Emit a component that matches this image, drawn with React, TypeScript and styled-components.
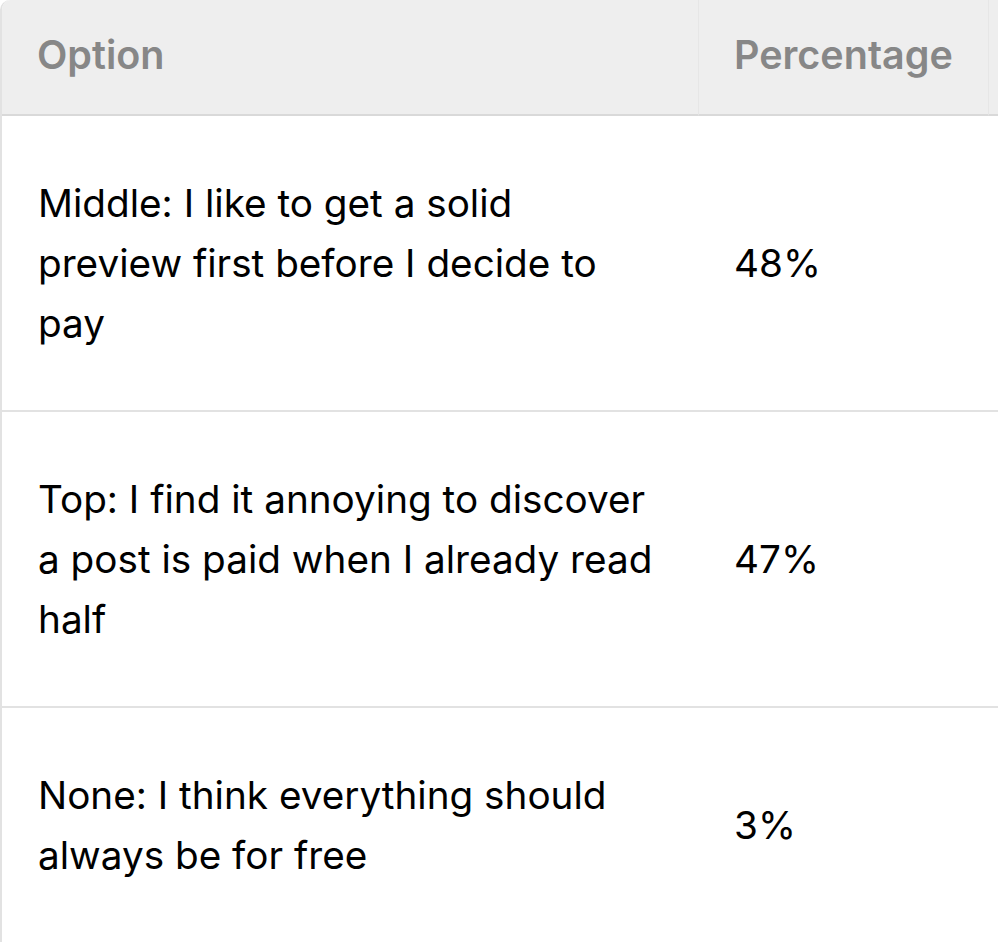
import React from "react";
import styled, { createGlobalStyle } from "styled-components";

const Global = createGlobalStyle`
  html, body { margin: 0; padding: 0; background: #ffffff; }
  body { font-family: Inter, "Liberation Sans", sans-serif; overflow: hidden; }
`;

const Frame = styled.div`
  width: 998px;
  height: 943px;
  overflow: hidden;
`;

const Table = styled.div`
  width: 1200px;
  display: grid;
  grid-template-columns: 696px 290px 1fr;
  border-left: 2px solid #e2e2e2;
  border-top-left-radius: 10px;
  overflow: hidden;
`;

const HeadCell = styled.div<{ $divider?: boolean }>`
  background: #eeeeee;
  height: 116px;
  display: flex;
  align-items: center;
  padding: 0 35px 4px;
  box-sizing: border-box;
  border-bottom: 2px solid #d9d9d9;
  border-left: ${(p) => (p.$divider ? "1px solid #e6e6e6" : "none")};
  color: #878787;
  font-weight: 600;
  font-size: 39.5px;
`;

const Cell = styled.div<{ $last?: boolean }>`
  display: flex;
  align-items: center;
  padding: 57px 36px;
  box-sizing: border-box;
  border-bottom: ${(p) => (p.$last ? "none" : "2px solid #e2e2e2")};
  color: #000000;
  font-size: 38.7px;
  line-height: 60px;
`;

const rows = [
  { option: "Middle: I like to get a solid preview first before I decide to pay", pct: "48%" },
  { option: "Top: I find it annoying to discover a post is paid when I already read half", pct: "47%" },
  { option: "None: I think everything should always be for free", pct: "3%" },
];

export default function App() {
  return (
    <Frame>
      <Global />
      <Table>
        <HeadCell>Option</HeadCell>
        <HeadCell $divider>Percentage</HeadCell>
        <HeadCell $divider />
        {rows.map((r, i) => (
          <React.Fragment key={r.pct}>
            <Cell $last={i === rows.length - 1}>{r.option}</Cell>
            <Cell $last={i === rows.length - 1}>{r.pct}</Cell>
            <Cell $last={i === rows.length - 1} />
          </React.Fragment>
        ))}
      </Table>
    </Frame>
  );
}
